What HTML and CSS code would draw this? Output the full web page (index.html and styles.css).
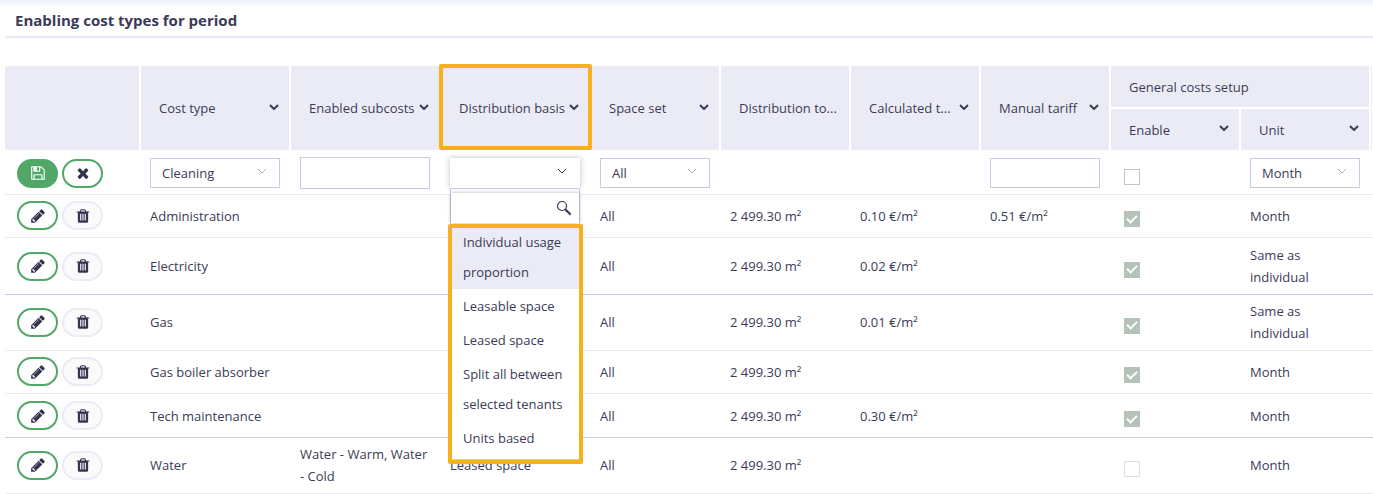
FILE: index.html
```
<!DOCTYPE html>
<html lang="en">
<head>
    <meta charset="UTF-8">
    <meta content="width=device-width, initial-scale=1.0" name="viewport">
    <title>Enabling cost types for period</title>
    <link rel="stylesheet" href="styles.css">
</head>
<body>
<svg class="sprite" aria-hidden="true">
    <symbol id="save" viewBox="0 0 1792 1792"><path d="M512 1536h768v-384h-768v384zm896 0h128v-896q0-14-10-38.500t-20-34.500l-281-281q-10-10-34-20t-39-10v416q0 40-28 68t-68 28h-576q-40 0-68-28t-28-68v-416h-128v1280h128v-416q0-40 28-68t68-28h832q40 0 68 28t28 68v416zm-384-928v-320q0-13-9.500-22.500t-22.500-9.500h-192q-13 0-22.500 9.500t-9.500 22.500v320q0 13 9.500 22.500t22.500 9.500h192q13 0 22.500-9.500t9.500-22.500zm640 32v928q0 40-28 68t-68 28h-1344q-40 0-68-28t-28-68v-1344q0-40 28-68t68-28h928q40 0 88 20t76 48l280 280q28 28 48 76t20 88z"/></symbol>
    <symbol id="times" viewBox="0 0 1792 1792"><path d="M1490 1322q0 40-28 68l-136 136q-28 28-68 28t-68-28l-294-294-294 294q-28 28-68 28t-68-28l-136-136q-28-28-28-68t28-68l294-294-294-294q-28-28-28-68t28-68l136-136q28-28 68-28t68 28l294 294 294-294q28-28 68-28t68 28l136 136q28 28 28 68t-28 68l-294 294 294 294q28 28 28 68z"/></symbol>
    <symbol id="pencil" viewBox="0 0 1792 1792"><path d="M491 1536l91-91-235-235-91 91v107h128v128h107zm523-928q0-22-22-22-10 0-17 7l-542 542q-7 7-7 17 0 22 22 22 10 0 17-7l542-542q7-7 7-17zm-54-192l416 416-832 832h-416v-416zm683 96q0 53-37 90l-166 166-416-416 166-165q36-38 90-38 53 0 91 38l235 234q37 39 37 91z"/></symbol>
    <symbol id="trash" viewBox="0 0 1792 1792"><path d="M704 1376v-704q0-14-9-23t-23-9h-64q-14 0-23 9t-9 23v704q0 14 9 23t23 9h64q14 0 23-9t9-23zm256 0v-704q0-14-9-23t-23-9h-64q-14 0-23 9t-9 23v704q0 14 9 23t23 9h64q14 0 23-9t9-23zm256 0v-704q0-14-9-23t-23-9h-64q-14 0-23 9t-9 23v704q0 14 9 23t23 9h64q14 0 23-9t9-23zm-544-992h448l-48-117q-7-9-17-11h-317q-10 2-17 11zm928 32v64q0 14-9 23t-23 9h-96v948q0 83-47 143.500t-113 60.500h-832q-66 0-113-58.500t-47-141.500v-952h-96q-14 0-23-9t-9-23v-64q0-14 9-23t23-9h309l70-167q15-37 54-63t79-26h320q40 0 79 26t54 63l70 167h309q14 0 23 9t9 23z"/></symbol>
    <symbol id="chevron" viewBox="0 0 10 6"><path d="M1 1l4 4 4-4" fill="none" stroke="currentColor"/></symbol>
    <symbol id="search" viewBox="0 0 16 16"><circle cx="6" cy="6" r="4.500" fill="none" stroke="currentColor" stroke-width="1.200"/><path d="M9.500 9.500l4.500 4.500" fill="none" stroke="currentColor" stroke-width="2.200" stroke-linecap="round"/></symbol>
</svg>

<h1 class="title">Enabling cost types for period</h1>

<table class="costs">
    <colgroup>
        <col class="col-actions">
        <col class="col-wide">
        <col class="col-wide">
        <col class="col-wide">
        <col class="col">
        <col class="col">
        <col class="col">
        <col class="col">
        <col class="col">
        <col class="col">
        <col>
    </colgroup>
    <thead>
    <tr>
        <th rowspan="2"></th>
        <th rowspan="2"><div class="head">Cost type<svg class="sort"><use href="#chevron"/></svg></div></th>
        <th rowspan="2"><div class="head">Enabled subcosts<svg class="sort"><use href="#chevron"/></svg></div></th>
        <th rowspan="2" class="marked"><div class="head">Distribution basis<svg class="sort"><use href="#chevron"/></svg></div></th>
        <th rowspan="2"><div class="head">Space set<svg class="sort"><use href="#chevron"/></svg></div></th>
        <th rowspan="2"><div class="head">Distribution to...</div></th>
        <th rowspan="2"><div class="head">Calculated t...<svg class="sort"><use href="#chevron"/></svg></div></th>
        <th rowspan="2"><div class="head">Manual tariff<svg class="sort"><use href="#chevron"/></svg></div></th>
        <th colspan="2" class="group"><div class="head">General costs setup</div></th>
        <th class="group rest"></th>
    </tr>
    <tr>
        <th class="sub"><div class="head">Enable<svg class="sort"><use href="#chevron"/></svg></div></th>
        <th class="sub"><div class="head">Unit<svg class="sort"><use href="#chevron"/></svg></div></th>
        <th class="sub rest"></th>
    </tr>
    </thead>
    <tbody>
    <tr class="edit-row">
        <td class="actions">
            <div class="buttons">
                <button class="btn btn-save" type="button" aria-label="Save"><svg><use href="#save"/></svg></button>
                <button class="btn" type="button" aria-label="Cancel"><svg><use href="#times"/></svg></button>
            </div>
        </td>
        <td>
            <div class="select">
                <select aria-label="Cost type"><option>Cleaning</option></select>
                <svg><use href="#chevron"/></svg>
            </div>
        </td>
        <td><input class="text text-tall" type="text" aria-label="Enabled subcosts"></td>
        <td>
            <div class="select open">
                <select aria-label="Distribution basis"><option></option></select>
                <svg><use href="#chevron"/></svg>
                <div class="menu">
                    <div class="search">
                        <input type="text" aria-label="Search">
                        <svg><use href="#search"/></svg>
                    </div>
                    <ul class="options" role="listbox" aria-label="Distribution basis">
                        <li class="active" role="option" aria-selected="true">Individual usage proportion</li>
                        <li role="option">Leasable space</li>
                        <li role="option">Leased space</li>
                        <li role="option">Split all between selected tenants</li>
                        <li role="option">Units based</li>
                    </ul>
                </div>
            </div>
        </td>
        <td>
            <div class="select">
                <select aria-label="Space set"><option>All</option></select>
                <svg><use href="#chevron"/></svg>
            </div>
        </td>
        <td></td>
        <td></td>
        <td><input class="text" type="text" aria-label="Manual tariff"></td>
        <td><input class="check" type="checkbox" aria-label="Enable"></td>
        <td>
            <div class="select">
                <select aria-label="Unit"><option>Month</option></select>
                <svg><use href="#chevron"/></svg>
            </div>
        </td>
        <td class="rest"></td>
    </tr>
    <tr>
        <td class="actions">
            <div class="buttons">
                <button class="btn" type="button" aria-label="Edit"><svg><use href="#pencil"/></svg></button>
                <button class="btn btn-delete" type="button" aria-label="Delete"><svg><use href="#trash"/></svg></button>
            </div>
        </td>
        <td>Administration</td>
        <td></td>
        <td></td>
        <td>All</td>
        <td>2 499.30 m²</td>
        <td>0.10 €/m²</td>
        <td>0.51 €/m²</td>
        <td><input class="check" type="checkbox" aria-label="Enable" checked disabled></td>
        <td>Month</td>
        <td class="rest"></td>
    </tr>
    <tr class="group-end">
        <td class="actions">
            <div class="buttons">
                <button class="btn" type="button" aria-label="Edit"><svg><use href="#pencil"/></svg></button>
                <button class="btn btn-delete" type="button" aria-label="Delete"><svg><use href="#trash"/></svg></button>
            </div>
        </td>
        <td>Electricity</td>
        <td></td>
        <td></td>
        <td>All</td>
        <td>2 499.30 m²</td>
        <td>0.02 €/m²</td>
        <td></td>
        <td><input class="check" type="checkbox" aria-label="Enable" checked disabled></td>
        <td>Same as individual</td>
        <td class="rest"></td>
    </tr>
    <tr>
        <td class="actions">
            <div class="buttons">
                <button class="btn" type="button" aria-label="Edit"><svg><use href="#pencil"/></svg></button>
                <button class="btn btn-delete" type="button" aria-label="Delete"><svg><use href="#trash"/></svg></button>
            </div>
        </td>
        <td>Gas</td>
        <td></td>
        <td></td>
        <td>All</td>
        <td>2 499.30 m²</td>
        <td>0.01 €/m²</td>
        <td></td>
        <td><input class="check" type="checkbox" aria-label="Enable" checked disabled></td>
        <td>Same as individual</td>
        <td class="rest"></td>
    </tr>
    <tr>
        <td class="actions">
            <div class="buttons">
                <button class="btn" type="button" aria-label="Edit"><svg><use href="#pencil"/></svg></button>
                <button class="btn btn-delete" type="button" aria-label="Delete"><svg><use href="#trash"/></svg></button>
            </div>
        </td>
        <td>Gas boiler absorber</td>
        <td></td>
        <td></td>
        <td>All</td>
        <td>2 499.30 m²</td>
        <td></td>
        <td></td>
        <td><input class="check" type="checkbox" aria-label="Enable" checked disabled></td>
        <td>Month</td>
        <td class="rest"></td>
    </tr>
    <tr class="group-end">
        <td class="actions">
            <div class="buttons">
                <button class="btn" type="button" aria-label="Edit"><svg><use href="#pencil"/></svg></button>
                <button class="btn btn-delete" type="button" aria-label="Delete"><svg><use href="#trash"/></svg></button>
            </div>
        </td>
        <td>Tech maintenance</td>
        <td></td>
        <td></td>
        <td>All</td>
        <td>2 499.30 m²</td>
        <td>0.30 €/m²</td>
        <td></td>
        <td><input class="check" type="checkbox" aria-label="Enable" checked disabled></td>
        <td>Month</td>
        <td class="rest"></td>
    </tr>
    <tr>
        <td class="actions">
            <div class="buttons">
                <button class="btn" type="button" aria-label="Edit"><svg><use href="#pencil"/></svg></button>
                <button class="btn btn-delete" type="button" aria-label="Delete"><svg><use href="#trash"/></svg></button>
            </div>
        </td>
        <td>Water</td>
        <td>Water - Warm, Water - Cold</td>
        <td>Leased space</td>
        <td>All</td>
        <td>2 499.30 m²</td>
        <td></td>
        <td></td>
        <td><input class="check" type="checkbox" aria-label="Enable" disabled></td>
        <td>Month</td>
        <td class="rest"></td>
    </tr>
    </tbody>
</table>

</body>
</html>
```
FILE: styles.css
```
* {
    box-sizing: border-box;
}
body {
    margin: 0;
    padding-left: 5px;
    background: linear-gradient(#edf2fa, #fff 8px) no-repeat #fff;
    color: #3b3b58;
    font: 13px/22px "Open Sans", "Noto Sans", sans-serif;
}
input, select, button {
    font: inherit;
    color: inherit;
}
.sprite {
    position: absolute;
    width: 0;
    height: 0;
}
.title {
    margin: 0 0 28px;
    padding: 8px 10px 4px;
    border-bottom: 2px solid #e8e8f6;
    font-size: 15px;
    line-height: 24px;
}

.costs {
    width: 100%;
    table-layout: fixed;
    border-spacing: 0;
}
.col-actions {
    width: 135px;
}
.col-wide {
    width: 150px;
}
.col {
    width: 130px;
}
th {
    height: 42px;
    padding: 0 10px 0 18px;
    border: solid #fff;
    border-width: 0 1px;
    background: #ebebf5;
    font-weight: normal;
    text-align: left;
    white-space: nowrap;
}
th:first-child {
    border-left-width: 0;
}
thead .group {
    border-bottom-width: 1px;
}
thead .sub {
    border-width: 1px 1px 0;
}
.head {
    display: flex;
    align-items: center;
    justify-content: space-between;
}
.sort {
    flex: none;
    width: 10px;
    height: 6px;
    margin-bottom: 3px;
    stroke-width: 2px;
}
.marked {
    position: relative;
}
.marked::after {
    content: "";
    position: absolute;
    inset: -2px -3px 0 -2px;
    border: 4px solid #f6b01e;
    border-radius: 2px;
}

td {
    height: 43px;
    padding: 5px 10px 6px;
    border-bottom: 1px solid #e8e8f6;
}
.edit-row td {
    height: 45px;
    padding-top: 7px;
    padding-bottom: 5px;
}
.group-end td {
    height: 44px;
    padding-top: 6px;
    border-bottom-color: #c7cae8;
}
td.actions {
    padding-left: 12px;
    padding-right: 0;
}
th.rest, td.rest {
    padding-left: 0;
    padding-right: 0;
}

.buttons {
    display: flex;
    gap: 4px;
}
.btn {
    display: flex;
    align-items: center;
    justify-content: center;
    width: 41px;
    height: 29px;
    padding: 0;
    border: 2px solid #51a866;
    border-radius: 15px;
    background: #fff;
    color: #33344f;
}
.btn svg {
    width: 16px;
    height: 16px;
    fill: currentColor;
}
.btn-save {
    background: #51a866;
    color: #fff;
}
.btn-delete {
    border-color: #ebebf5;
    background: #fafafa;
}

.text {
    display: block;
    width: 100%;
    height: 30px;
    padding: 0 12px;
    border: 1px solid #c7cae8;
    background: #fff;
}
.text-tall {
    height: 32px;
}
.select {
    position: relative;
}
.select select {
    appearance: none;
    display: block;
    width: 100%;
    height: 30px;
    padding: 0 28px 0 11px;
    border: 1px solid #c7cae8;
    border-radius: 0;
    background: #fff;
}
.select > svg {
    position: absolute;
    top: 10px;
    right: 13px;
    width: 10px;
    height: 6px;
    color: #a9a9b0;
    pointer-events: none;
}
.open select {
    border-color: #fff;
    box-shadow: 0 0 6px rgba(0, 0, 0, .25);
}
.open > svg {
    color: #33344f;
}

.menu {
    position: absolute;
    top: 100%;
    left: 0;
    right: 0;
    z-index: 1;
    padding-top: 4px;
    border: 1px solid #c7cae8;
    background: #fff;
}
.search {
    position: relative;
    padding-bottom: 2px;
}
.search input {
    display: block;
    width: 100%;
    height: 30px;
    padding: 0 28px 0 12px;
    border: 0;
    box-shadow: 0 0 4px rgba(0, 0, 0, .3);
}
.search svg {
    position: absolute;
    top: 7px;
    right: 7px;
    width: 16px;
    height: 16px;
}
.options {
    position: relative;
    margin: 0;
    padding: 0 0 4px;
    background: #fff;
    line-height: 30px;
    list-style: none;
}
.options li {
    padding: 2px 12px;
}
.options .active {
    background: #ebebf5;
}
.options::after {
    content: "";
    position: absolute;
    inset: -1px -4px -5px -3px;
    border: 4px solid #f6b01e;
    border-radius: 2px;
}

.check {
    appearance: none;
    display: grid;
    place-items: center;
    width: 16px;
    height: 16px;
    margin: 7px 4px 0;
    border: 1px solid #c4c4c4;
    background: #fff;
}
.check:disabled {
    border-color: #dedede;
}
.check:checked {
    padding-bottom: 3px;
    border: 0;
    background: #b5c2b8;
}
.check:checked::before {
    content: "";
    box-sizing: border-box;
    width: 6px;
    height: 10px;
    border: solid #fff;
    border-width: 0 2px 2px 0;
    transform: rotate(45deg);
}
```
